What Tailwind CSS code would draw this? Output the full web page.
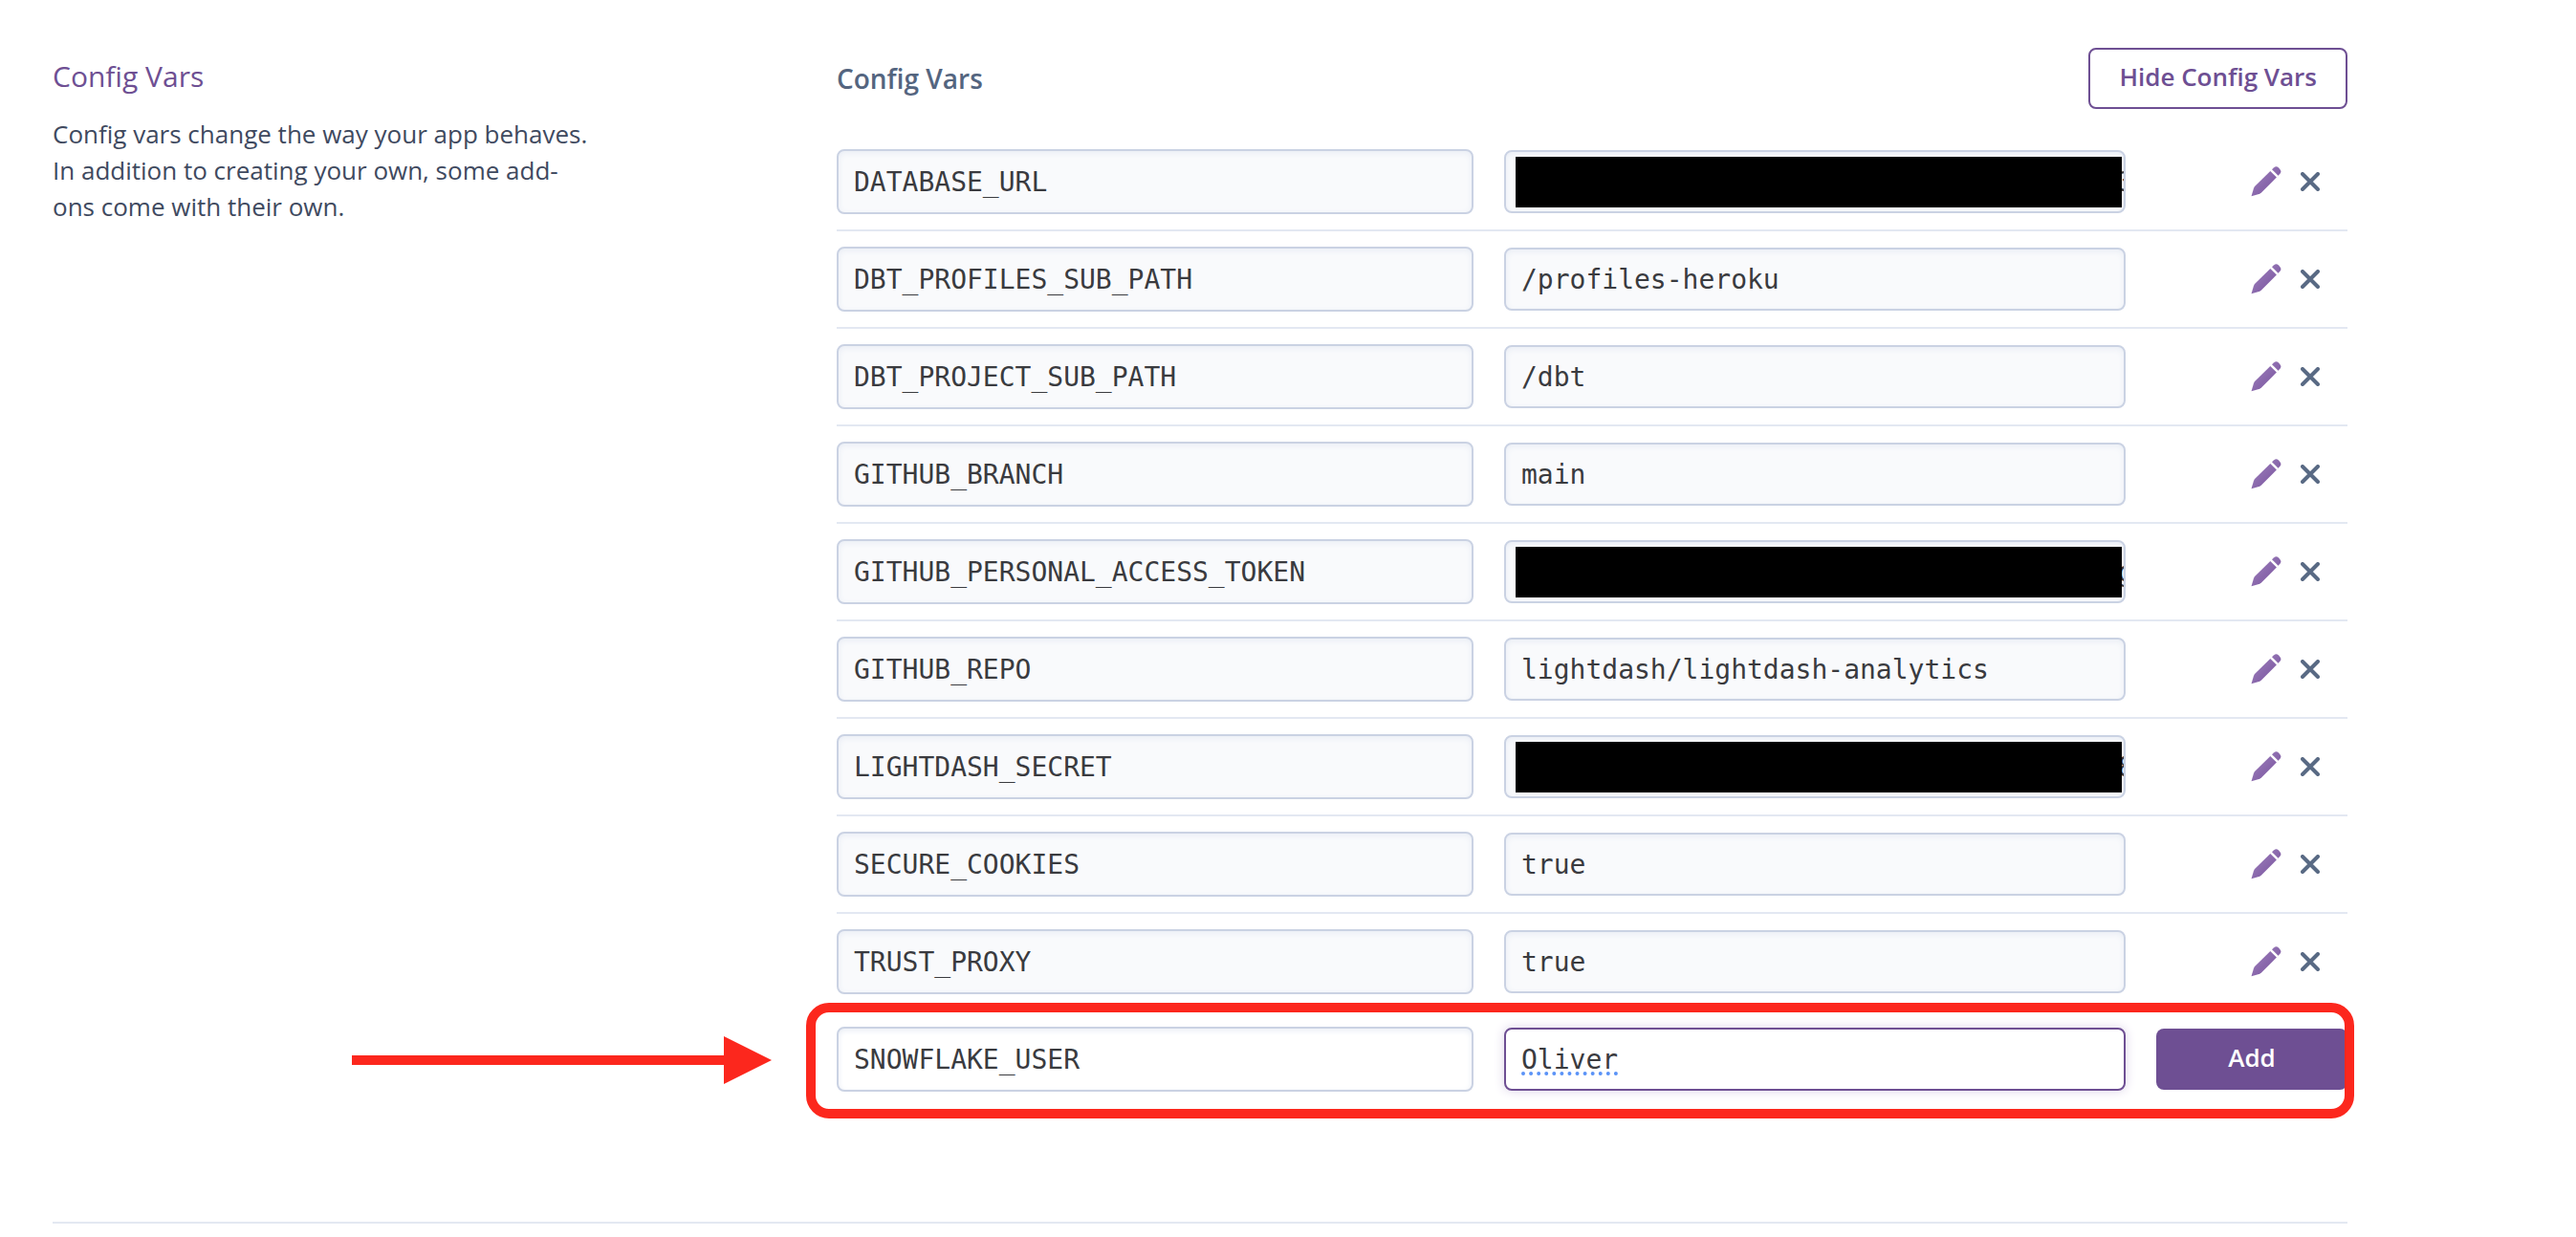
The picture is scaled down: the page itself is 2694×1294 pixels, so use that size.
<!DOCTYPE html>
<html lang="en">
<head>
<meta charset="utf-8">
<meta name="viewport" content="width=device-width, initial-scale=1">
<title>Config Vars</title>
<script src="https://cdn.jsdelivr.net/npm/@tailwindcss/browser@4"></script>
</head>
<body class="bg-white font-['Open_Sans',sans-serif] text-[#3f4a5f]">
<svg class="absolute size-0" aria-hidden="true">
  <defs>
    <linearGradient id="pencil-fill" gradientUnits="userSpaceOnUse" x1="0" y1="0" x2="32" y2="32">
      <stop offset="0" stop-color="#a186bf"/>
      <stop offset="1" stop-color="#744c9a"/>
    </linearGradient>
    <symbol id="icon-edit" viewBox="0 0 32 32">
      <path fill="url(#pencil-fill)" d="M0.5 31.2 L2.8 23.4 Q3.3 21.8 4.5 20.6 L20.3 4.9 L26.9 11.4 L11.2 27.2 Q10 28.4 8.4 29 Z"/>
      <path fill="url(#pencil-fill)" d="M22 3.3 L24.2 1.2 Q26.6 -0.7 29 1.5 L30.3 2.9 Q32.3 5.3 30.6 7.6 L28.6 9.8 Z"/>
    </symbol>
    <symbol id="icon-remove" viewBox="0 0 20 20">
      <path d="M2 2 L18 18 M18 2 L2 18" fill="none" stroke="#596a84" stroke-width="4" stroke-linecap="round"/>
    </symbol>
  </defs>
</svg>
<main class="pl-[55px] pr-[239px]">
  <section class="grid grid-cols-[41fr_79fr] border-b-2 border-[#e3e8f2] pt-[50px] pb-30">
    <aside class="pt-2.5">
      <h2 class="text-[30px] leading-10 text-[#6e4f93]">Config Vars</h2>
      <p class="mt-[21px] max-w-[570px] text-[26px] leading-[38px]">Config vars change the way your app behaves. In addition to creating your own, some add-ons come with their own.</p>
    </aside>
    <div>
      <header class="mb-[26px] flex items-center justify-between">
        <h3 class="text-[28px] leading-10 font-semibold text-[#54657f]">Config Vars</h3>
        <button type="button" class="h-16 rounded-lg border-2 border-[#6e4f93] px-[30px] pb-1 text-[26px] font-semibold text-[#6e4f93]">Hide Config Vars</button>
      </header>
      <ul id="vars"></ul>
      <form class="relative grid grid-cols-[666fr_650fr_200fr] items-center gap-8 py-4">
        <input aria-label="New key" value="SNOWFLAKE_USER" spellcheck="false" class="h-[68px] w-full min-w-0 rounded-lg border-2 border-[#cad2e3] bg-white px-4 font-['DejaVu_Sans_Mono',monospace] text-[28px] text-[#3a3b3f] shadow-[inset_0_2px_6px_#e9edf5] outline-none">
        <input aria-label="New value" value="Oliver" spellcheck="false" class="h-[66px] w-full min-w-0 rounded-lg border-2 border-[#6e4f93] bg-white px-4 font-['DejaVu_Sans_Mono',monospace] text-[28px] text-[#3a3b3f] underline decoration-[#5b93f7] decoration-dotted decoration-4 underline-offset-4 shadow-[0_0_12px_#dcd3e8] outline-none">
        <button type="button" class="h-16 rounded-lg bg-[#6e4f93] pb-1 text-[26px] font-semibold text-white">Add</button>
        <div class="pointer-events-none absolute -top-[9px] -right-[7px] -bottom-[12px] -left-8 rounded-3xl border-10 border-[#fc271d]"></div>
        <svg class="pointer-events-none absolute top-[26px] -left-[507px] h-[50px] w-[439px]" viewBox="0 0 439 50" aria-hidden="true"><path fill="#fc271d" d="M0 20H389V0L439 25L389 50V30H0Z"/></svg>
      </form>
    </div>
  </section>
</main>

<template id="var-row">
  <li class="grid grid-cols-[666fr_650fr_200fr] items-center gap-8 border-b-2 border-[#e3e8f2] py-4">
    <input readonly data-key aria-label="Key" spellcheck="false" class="h-[68px] w-full min-w-0 rounded-lg border-2 border-[#cad2e3] bg-[#f9fafc] px-4 font-['DejaVu_Sans_Mono',monospace] text-[28px] text-[#3a3b3f] shadow-[inset_0_2px_6px_#e9edf5] outline-none">
    <div class="relative">
      <input readonly data-value aria-label="Value" spellcheck="false" class="block h-[66px] w-full min-w-0 rounded-lg border-2 border-[#cad2e3] bg-[#f9fafc] pl-4 font-['DejaVu_Sans_Mono',monospace] text-[28px] text-[#3a3b3f] shadow-[inset_0_2px_6px_#e9edf5] outline-none">
      <div data-cover class="absolute top-[7px] right-1 left-3 h-[53px] bg-black"></div>
    </div>
    <div class="flex items-center justify-end gap-5 pr-[29px]">
      <button type="button" aria-label="Edit"><svg class="block size-8"><use href="#icon-edit"/></svg></button>
      <button type="button" aria-label="Remove"><svg class="block size-5"><use href="#icon-remove"/></svg></button>
    </div>
  </li>
</template>
<script>
  const hidden = last => '•'.repeat(37) + last;
  const vars = [
    ['DATABASE_URL', hidden('3'), true],
    ['DBT_PROFILES_SUB_PATH', '/profiles-heroku'],
    ['DBT_PROJECT_SUB_PATH', '/dbt'],
    ['GITHUB_BRANCH', 'main'],
    ['GITHUB_PERSONAL_ACCESS_TOKEN', hidden('g'), true],
    ['GITHUB_REPO', 'lightdash/lightdash-analytics'],
    ['LIGHTDASH_SECRET', hidden('8'), true],
    ['SECURE_COOKIES', 'true'],
    ['TRUST_PROXY', 'true'],
  ];
  const list = document.getElementById('vars');
  const template = document.getElementById('var-row');
  for (const [key, value, secret] of vars) {
    const row = template.content.cloneNode(true);
    row.querySelector('[data-key]').setAttribute('value', key);
    row.querySelector('[data-value]').setAttribute('value', value);
    if (!secret) row.querySelector('[data-cover]').remove();
    list.append(row);
  }
</script>
</body>
</html>
